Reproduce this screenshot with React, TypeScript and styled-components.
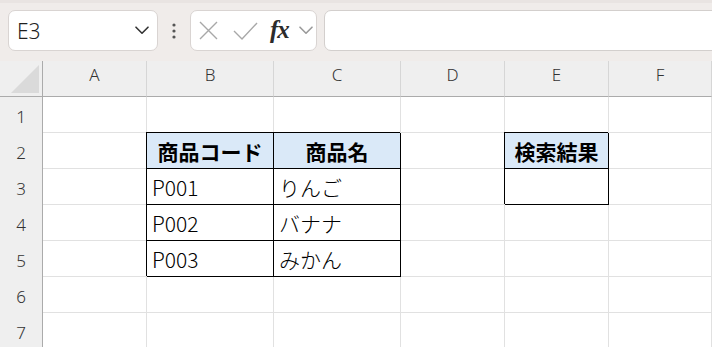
import React from "react";
import styled, { createGlobalStyle } from "styled-components";

const GlobalStyle = createGlobalStyle`
  html, body {
    margin: 0;
    padding: 0;
    background: #ffffff;
  }
  body {
    width: 712px;
    height: 347px;
    overflow: hidden;
    font-family: "Noto Sans", "Noto Sans CJK JP", sans-serif;
  }
  * { box-sizing: border-box; }
`;

const Window = styled.div`
  width: 712px;
  height: 347px;
  overflow: hidden;
  display: flex;
  flex-direction: column;
`;

const Toolbar = styled.div`
  height: 61px;
  flex: none;
  display: flex;
  align-items: flex-start;
  padding: 7px 0 0 8px;
  background: #f0ecea;
  border-top: 3px solid #e9e4e2;
`;

const NameBox = styled.div`
  width: 150px;
  height: 41px;
  background: #fff;
  border: 1px solid #d9d4d2;
  border-radius: 7px;
  display: flex;
  align-items: center;
  justify-content: space-between;
  padding: 0 8px 0 8px;
  font-family: "Noto Sans", sans-serif;
  font-size: 21px;
  font-weight: 300;
  color: #1f1f1f;
`;

const Dots = styled.div`
  width: 32px;
  height: 41px;
  display: flex;
  align-items: center;
  justify-content: center;
`;

const FormulaButtons = styled.div`
  width: 127px;
  height: 41px;
  background: #fff;
  border: 1px solid #d9d4d2;
  border-radius: 7px;
  display: flex;
  align-items: center;
  padding-left: 8px;
`;

const IconSlot = styled.span<{ $w: number }>`
  width: ${(p) => p.$w}px;
  display: flex;
  align-items: center;
  justify-content: flex-start;
`;

const Fx = styled.span`
  font-family: "Liberation Serif", serif;
  font-style: italic;
  font-weight: bold;
  font-size: 25px;
  color: #2b2b2b;
  letter-spacing: -1px;
  line-height: 1;
  margin-top: -3px;
  width: 29px;
`;

const FormulaInput = styled.div`
  flex: 1;
  height: 41px;
  margin-left: 7px;
  margin-right: -12px;
  background: #fff;
  border: 1px solid #d3cfcd;
  border-radius: 7px;
`;

const Sheet = styled.div`
  display: grid;
  grid-template-columns: 43px 104px 127px 127px 104px 104px 1fr;
  grid-template-rows: 36px repeat(7, 36px);
`;

const Corner = styled.div`
  background: #efefef;
  border-right: 1px solid #ababab;
  border-bottom: 1px solid #ababab;
  display: flex;
  align-items: flex-end;
  justify-content: flex-end;
  padding: 0 3px 3px 0;
`;

const ColHead = styled.div`
  background: #efefef;
  border-bottom: 1px solid #ababab;
  border-right: 1px solid #d6d6d6;
  display: flex;
  justify-content: center;
  align-items: center;
  padding-bottom: 8px;
  font-size: 17px;
  font-weight: 300;
  color: #333;
`;

const RowHead = styled.div`
  background: #efefef;
  border-right: 1px solid #ababab;
  display: flex;
  justify-content: center;
  align-items: center;
  padding-top: 2px;
  font-size: 17px;
  font-weight: 300;
  color: #333;
`;

const Cell = styled.div<{ $boxed?: boolean; $head?: boolean }>`
  background: ${(p) => (p.$head ? "#dae9f8" : "#fff")};
  border-right: 1px solid ${(p) => (p.$boxed ? "#000" : "#e1e1e1")};
  border-bottom: 1px solid ${(p) => (p.$boxed ? "#000" : "#e1e1e1")};
  box-shadow: ${(p) => (p.$boxed ? "-1px -1px 0 0 #000" : "none")};
  display: flex;
  align-items: center;
  justify-content: ${(p) => (p.$head ? "center" : "flex-start")};
  padding: 0 5px;
  font-family: "Noto Sans CJK JP", sans-serif;
  font-size: 21px;
  font-weight: ${(p) => (p.$head ? 700 : 300)};
  color: #000;
  white-space: nowrap;
  overflow: hidden;
`;

type CellData = { text?: string; boxed?: boolean; head?: boolean };

const cols = ["A", "B", "C", "D", "E", "F"];

const rows: CellData[][] = [
  [{}, {}, {}, {}, {}, {}],
  [{}, { text: "商品コード", boxed: true, head: true }, { text: "商品名", boxed: true, head: true }, {}, { text: "検索結果", boxed: true, head: true }, {}],
  [{}, { text: "P001", boxed: true }, { text: "りんご", boxed: true }, {}, { boxed: true }, {}],
  [{}, { text: "P002", boxed: true }, { text: "バナナ", boxed: true }, {}, {}, {}],
  [{}, { text: "P003", boxed: true }, { text: "みかん", boxed: true }, {}, {}, {}],
  [{}, {}, {}, {}, {}, {}],
  [{}, {}, {}, {}, {}, {}],
];

function Chevron({ color, size }: { color: string; size: number }) {
  return (
    <svg width={size} height={size * 0.6} viewBox="0 0 14 8" fill="none">
      <path d="M1 1 L7 7 L13 1" stroke={color} strokeWidth="1.6" strokeLinejoin="round" strokeLinecap="round" />
    </svg>
  );
}

export default function App() {
  return (
    <>
      <GlobalStyle />
      <Window>
        <Toolbar>
          <NameBox>
            <span>E3</span>
            <Chevron color="#333" size={14} />
          </NameBox>
          <Dots>
            <svg width="4" height="16" viewBox="0 0 4 16">
              <circle cx="2" cy="2" r="1.6" fill="#555" />
              <circle cx="2" cy="8" r="1.6" fill="#555" />
              <circle cx="2" cy="14" r="1.6" fill="#555" />
            </svg>
          </Dots>
          <FormulaButtons>
            <IconSlot $w={34}>
              <svg width="19" height="19" viewBox="0 0 19 19" fill="none">
                <path d="M1 1 L18 18 M18 1 L1 18" stroke="#a8a8a8" strokeWidth="1.4" />
              </svg>
            </IconSlot>
            <IconSlot $w={37}>
              <svg width="25" height="18" viewBox="0 0 25 18" fill="none">
                <path d="M1 9 L9 17 L24 1" stroke="#a8a8a8" strokeWidth="1.4" />
              </svg>
            </IconSlot>
            <Fx>fx</Fx>
            <Chevron color="#9a9a9a" size={14} />
          </FormulaButtons>
          <FormulaInput />
        </Toolbar>
        <Sheet>
          <Corner>
            <svg width="28" height="28" viewBox="0 0 28 28">
              <polygon points="28,0 28,28 0,28" fill="#dadada" />
            </svg>
          </Corner>
          {cols.map((c) => (
            <ColHead key={c}>{c}</ColHead>
          ))}
          {rows.map((row, r) => (
            <React.Fragment key={r}>
              <RowHead>{r + 1}</RowHead>
              {row.map((cell, i) => (
                <Cell key={i} $boxed={cell.boxed} $head={cell.head}>
                  {cell.text}
                </Cell>
              ))}
            </React.Fragment>
          ))}
        </Sheet>
      </Window>
    </>
  );
}
